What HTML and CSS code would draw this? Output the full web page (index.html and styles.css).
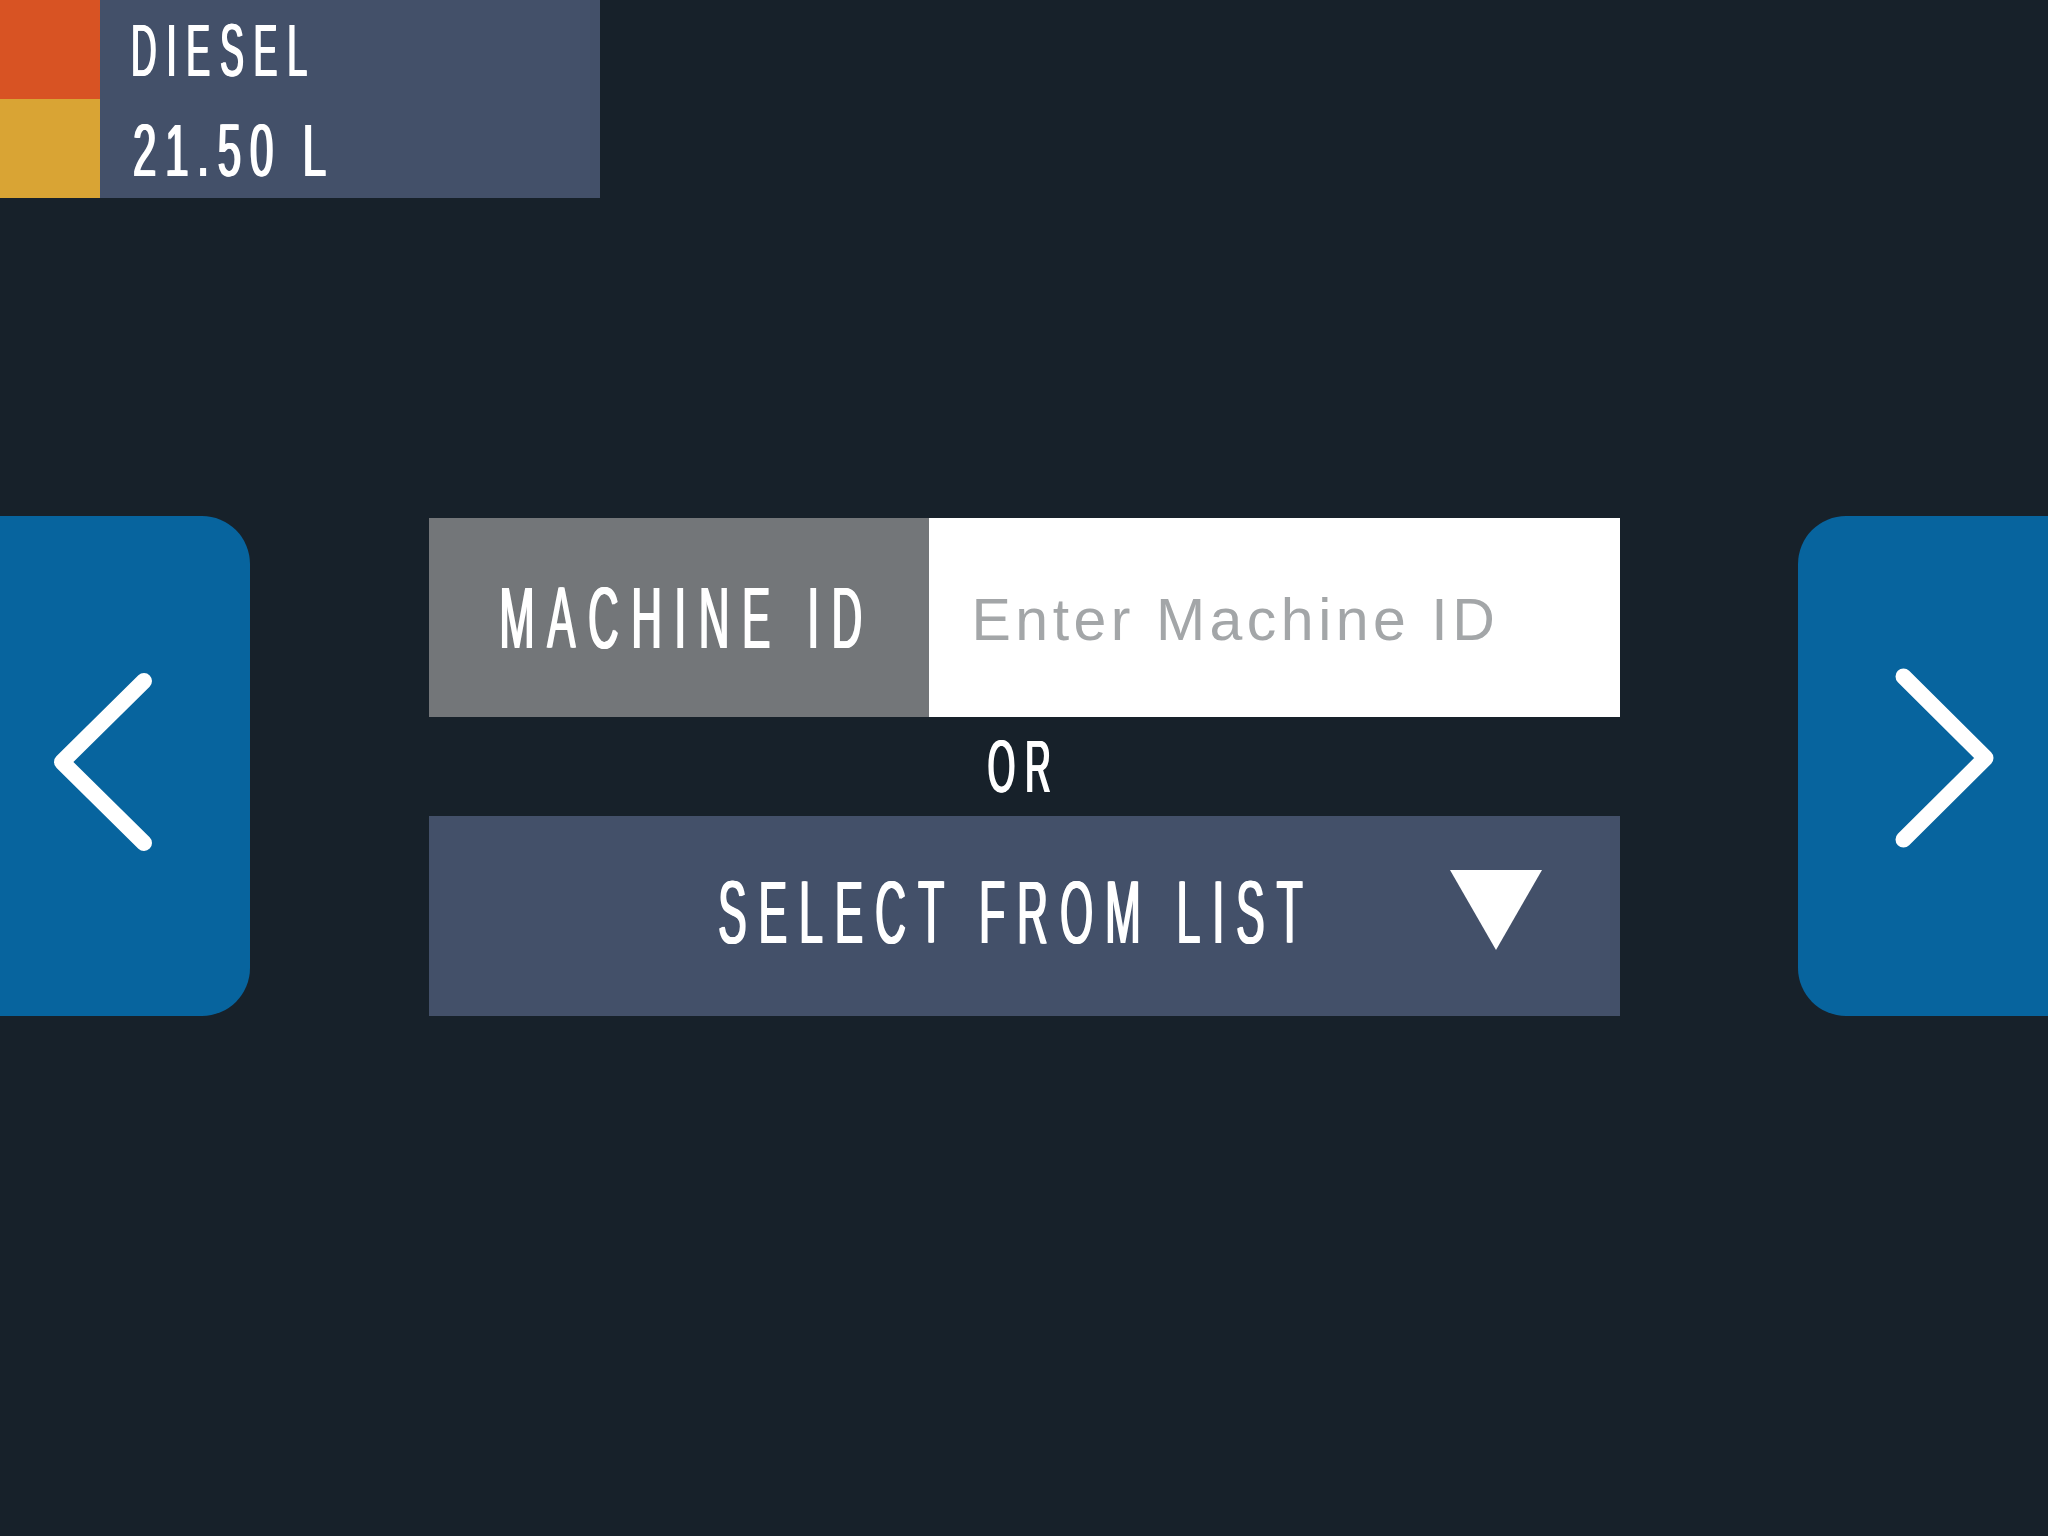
FILE: index.html
```html
<!DOCTYPE html>
<html lang="en">
<head>
<meta charset="utf-8">
<title>Machine selection</title>
<link rel="stylesheet" href="styles.css">
</head>
<body>
<div class="screen">
  <header class="fuel">
    <div class="fuel-swatches">
      <div class="swatch swatch-orange"></div>
      <div class="swatch swatch-yellow"></div>
    </div>
    <div class="fuel-info">
      <div class="fuel-row fuel-row-name"><span class="cond fuel-name">DIESEL</span></div>
      <div class="fuel-row fuel-row-qty"><span class="cond fuel-qty">21.50 L</span></div>
    </div>
  </header>

  <main class="main">
    <button class="nav nav-prev" type="button" aria-label="Previous">
      <svg class="chevron" viewBox="0 0 250 500" width="250" height="500">
        <polyline points="144,165 62,246 144,327" />
      </svg>
    </button>

    <section class="center">
      <div class="id-row">
        <div class="id-label"><span class="cond id-label-text">MACHINE ID</span></div>
        <input class="id-input" type="text" placeholder="Enter Machine ID">
      </div>
      <div class="or"><span class="cond">OR</span></div>
      <button class="select" type="button">
        <span class="cond select-text">SELECT FROM LIST</span>
        <svg class="caret" viewBox="0 0 92 80" width="92" height="80">
          <polygon points="0,0 92,0 46,80" />
        </svg>
      </button>
    </section>

    <button class="nav nav-next" type="button" aria-label="Next">
      <svg class="chevron" viewBox="0 0 250 500" width="250" height="500">
        <polyline points="105.5,160.5 187.5,242 105.5,323.5" />
      </svg>
    </button>
  </main>
</div>
</body>
</html>
```

FILE: styles.css
```css
html, body {
  margin: 0;
  padding: 0;
}

body {
  width: 2048px;
  height: 1536px;
  overflow: hidden;
  background: #17212a;
  color: #ffffff;
  font-family: "Liberation Sans", Arial, sans-serif;
}

.screen {
  display: flex;
  flex-direction: column;
  height: 1536px;
}

/* condensed display text: narrowed glyphs, slightly thickened vertical strokes */
.cond {
  display: inline-block;
  white-space: nowrap;
  line-height: 1;
  letter-spacing: 0.28em;
  transform: scaleX(0.48);
  text-shadow: 1.8px 0 0 #ffffff, -1.8px 0 0 #ffffff;
  flex-shrink: 0;
}

/* fuel header */
.fuel {
  display: flex;
  width: 600px;
  height: 198px;
  background: #435069;
  flex-shrink: 0;
}

.fuel-swatches {
  width: 100px;
  display: flex;
  flex-direction: column;
}

.swatch {
  flex: 1;
}

.swatch-orange {
  background: #d85323;
}

.swatch-yellow {
  background: #d9a434;
}

.fuel-info {
  padding-left: 31px;
}

.fuel-row {
  height: 98px;
  box-sizing: border-box;
  padding-top: 14px;
  line-height: 1;
}

.fuel-row-name {
  font-size: 74px;
}

.fuel-row-qty {
  font-size: 75px;
  padding-top: 15px;
}

.fuel-name {
  transform-origin: left center;
}

.fuel-qty {
  letter-spacing: 0.21em;
  transform: scaleX(0.56);
  transform-origin: left center;
  margin-left: 2px;
}

/* main area */
.main {
  display: flex;
  justify-content: space-between;
  margin-top: 318px;
  height: 500px;
}

.nav {
  width: 250px;
  height: 500px;
  padding: 0;
  border: none;
  background: #07649e;
  flex-shrink: 0;
}

.nav-prev {
  border-radius: 0 48px 48px 0;
}

.nav-next {
  border-radius: 48px 0 0 48px;
}

.chevron {
  display: block;
}

.chevron polyline {
  fill: none;
  stroke: #ffffff;
  stroke-width: 16;
  stroke-linecap: round;
  stroke-linejoin: round;
}

.center {
  width: 1191px;
  padding-top: 2px;
  display: flex;
  flex-direction: column;
}

.id-row {
  display: flex;
  height: 199px;
}

.id-label {
  width: 500px;
  flex-shrink: 0;
  background: #737679;
  display: flex;
  align-items: center;
  justify-content: center;
  font-size: 88px;
  overflow: hidden;
}

.id-label-text {
  letter-spacing: 0.3em;
  margin-left: 18px;
}

.id-input {
  flex: 1;
  min-width: 0;
  height: 199px;
  box-sizing: border-box;
  margin: 0;
  border: none;
  outline: none;
  border-radius: 0;
  background: #ffffff;
  padding: 4px 0 0 43px;
  font-family: "Liberation Sans", Arial, sans-serif;
  font-size: 59px;
  letter-spacing: 4.5px;
  color: #333333;
}

.id-input::placeholder {
  color: #a3a6a8;
  opacity: 1;
}

.or {
  height: 99px;
  display: flex;
  align-items: center;
  justify-content: center;
  font-size: 74px;
}

.select {
  position: relative;
  height: 200px;
  width: 100%;
  margin: 0;
  padding: 0;
  border: none;
  border-radius: 0;
  background: #435069;
  color: #ffffff;
  font-family: "Liberation Sans", Arial, sans-serif;
  font-size: 89px;
  display: flex;
  align-items: center;
  justify-content: center;
  overflow: hidden;
}

.select-text {
  margin-right: 16px;
  margin-bottom: 8px;
}

.caret {
  position: absolute;
  right: 78px;
  top: 54px;
  display: block;
}

.caret polygon {
  fill: #ffffff;
}
```
